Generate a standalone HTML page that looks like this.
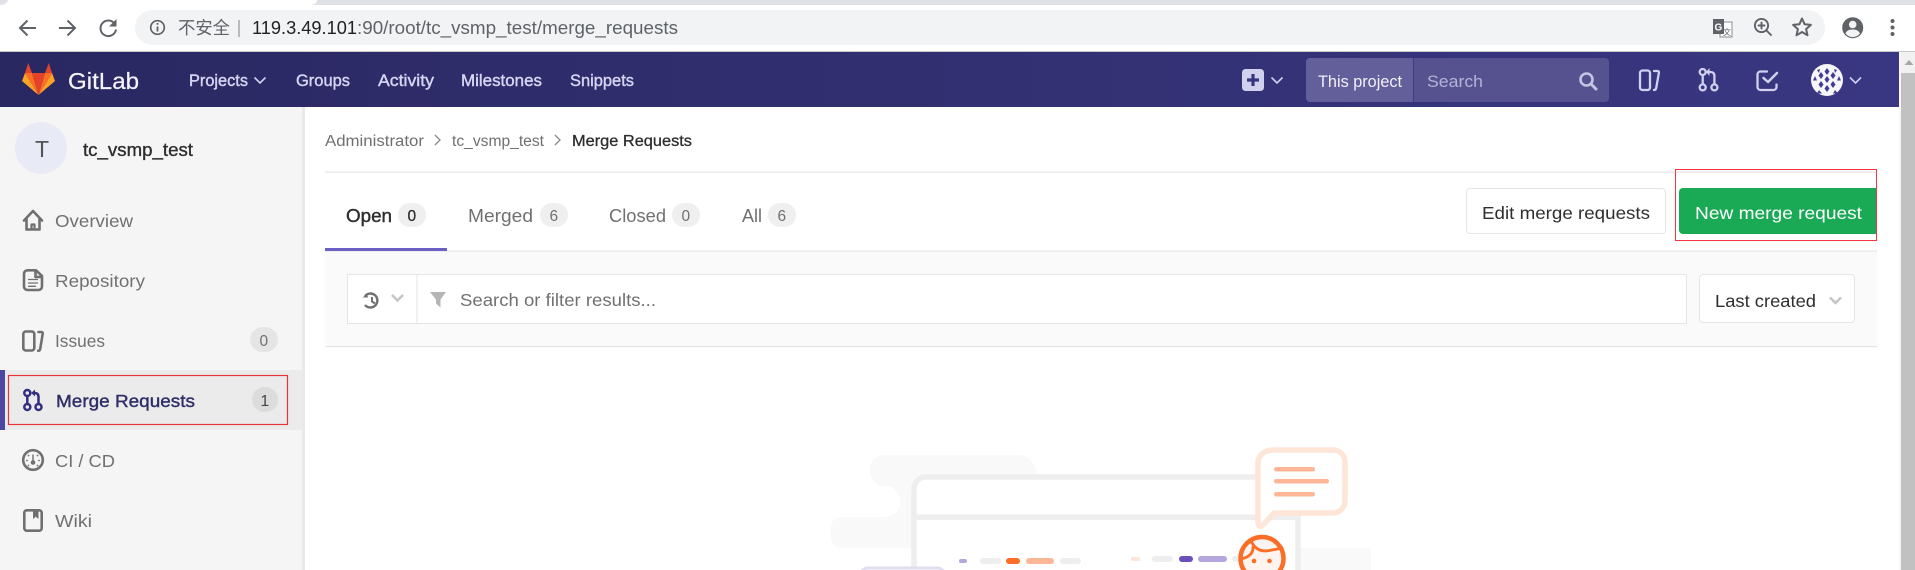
<!DOCTYPE html>
<html lang="en"><head><meta charset="utf-8"><title>Merge Requests</title>
<style>
html,body{margin:0;padding:0;width:1915px;height:570px;overflow:hidden;background:#fff}
svg{display:block;font-family:"Liberation Sans","Noto Sans CJK SC",sans-serif}
</style></head><body>
<svg xmlns="http://www.w3.org/2000/svg" width="1915" height="570" viewBox="0 0 1915 570">
<defs><linearGradient id="nav" x1="0" x2="1" y1="0" y2="0"><stop offset="0" stop-color="#2a2861"/><stop offset="1" stop-color="#3a3782"/></linearGradient></defs>
<rect width="1915" height="570" fill="#fff"/>
<!-- browser chrome -->
<path d="M311 5a6 5 0 0 0 6-5H1915V5Z" fill="#dee1e6"/>
<path d="M0 0H8Q6 5 0 5Z" fill="#dee1e6"/>
<rect x="0" y="51" width="1915" height="1" fill="#c9cacc"/>
<rect x="135" y="10" width="1690" height="35" rx="17.5" fill="#f1f3f4"/>
<g fill="none" stroke="#5f6368" stroke-width="2">
<path d="M36 28H20M27.5 20.5L20 28l7.5 7.5"/>
<path d="M59 28H75M67.5 20.5L75 28l-7.5 7.5"/>
<path d="M114.8 24A7.8 7.8 0 1 0 116 29.5"/>
<circle cx="157.5" cy="27.5" r="6.8" stroke-width="1.7"/>
<path d="M157.5 26.5v5M157.5 23v1.8" stroke-width="1.8"/>
</g>
<path d="M116.5 19v7.5H109Z" fill="#5f6368"/>
<text x="178" y="34" font-size="17.5" fill="#5f6368" textLength="52" lengthAdjust="spacingAndGlyphs">不安全</text>
<rect x="238.5" y="20" width="1" height="17" fill="#80868b"/>
<text x="252" y="34" font-size="18" fill="#202124" textLength="105" lengthAdjust="spacingAndGlyphs">119.3.49.101</text>
<text x="357" y="34" font-size="18" fill="#5f6368" textLength="321" lengthAdjust="spacingAndGlyphs">:90/root/tc_vsmp_test/merge_requests</text>
<!-- chrome right icons -->
<rect x="1720" y="22" width="12" height="15" fill="#fff" stroke="#8a8d91" stroke-width="1"/>
<text x="1723" y="35" font-size="8" fill="#5f6368">文</text>
<rect x="1713" y="19" width="11" height="15" fill="#5f6368"/>
<text x="1714.5" y="30.5" font-size="10" font-weight="bold" fill="#fff">G</text>
<g fill="none" stroke="#5f6368" stroke-width="1.9">
<circle cx="1761.5" cy="25.5" r="6.6"/>
<path d="M1766.5 30.5L1771 35M1758.5 25.5h6M1761.5 22.5v6" stroke-linecap="round"/>
<path d="M1802 18.5l2.6 5.8 6.3.6-4.8 4.2 1.4 6.2-5.5-3.3-5.5 3.3 1.4-6.2-4.8-4.2 6.3-.6Z" stroke-width="2" stroke-linejoin="round"/>
</g>
<circle cx="1852.7" cy="27.7" r="10.5" fill="#5f6368"/>
<circle cx="1852.7" cy="24.5" r="3.8" fill="#f1f3f4"/>
<path d="M1845.5 33.5c1-3.2 4.5-4 7.2-4s6.2.8 7.2 4a9 9 0 0 1-14.4 0Z" fill="#f1f3f4"/>
<g fill="#5f6368"><circle cx="1892.5" cy="21" r="2"/><circle cx="1892.5" cy="27.5" r="2"/><circle cx="1892.5" cy="34" r="2"/></g>
<!-- navbar -->
<rect x="0" y="52" width="1899" height="55" fill="url(#nav)"/>
<polygon points="22,81 25,73 38.5,95" fill="#fca326"/>
<polygon points="55,81 52,73 38.5,95" fill="#fca326"/>
<polygon points="25,73 32,73 38.5,95" fill="#fc6d26"/>
<polygon points="52,73 45,73 38.5,95" fill="#fc6d26"/>
<polygon points="32,73 45,73 38.5,95" fill="#e24329"/>
<polygon points="25,73 28.2,63 32,73" fill="#e24329"/>
<polygon points="52,73 48.8,63 45,73" fill="#e24329"/>
<text x="68" y="89" font-size="23.5" fill="#f4f4fa" stroke="#f4f4fa" stroke-width=".2" textLength="71" lengthAdjust="spacingAndGlyphs">GitLab</text>
<g font-size="16.5" fill="#d6d5f2" stroke="#d6d5f2" stroke-width=".4">
<text x="189" y="86" textLength="59" lengthAdjust="spacingAndGlyphs">Projects</text>
<text x="296" y="86" textLength="54" lengthAdjust="spacingAndGlyphs">Groups</text>
<text x="378" y="86" textLength="56" lengthAdjust="spacingAndGlyphs">Activity</text>
<text x="461" y="86" textLength="81" lengthAdjust="spacingAndGlyphs">Milestones</text>
<text x="570" y="86" textLength="64" lengthAdjust="spacingAndGlyphs">Snippets</text>
</g>
<g fill="none" stroke="#d1d0ef" stroke-width="1.6">
<path d="M254.5 77.5l5.5 5.5 5.5-5.5"/>
<path d="M1271.5 77.5l5.5 5.5 5.5-5.5"/>
<path d="M1850 77.5l5.5 5.5 5.5-5.5"/>
</g>
<rect x="1242" y="69" width="22" height="22" rx="3.5" fill="#d1d0ef"/>
<path d="M1253 74v12M1247 80h12" stroke="#38367f" stroke-width="3.2"/>
<path d="M1310 58H1413V102H1310a4 4 0 0 1-4-4V62a4 4 0 0 1 4-4Z" fill="#625f9b"/>
<path d="M1414 58H1605a4 4 0 0 1 4 4V98a4 4 0 0 1-4 4H1414Z" fill="#55528f"/>
<rect x="1413" y="58" width="1" height="44" fill="#3d3a85"/>
<text x="1318" y="87" font-size="16.5" fill="#f0f0f8" textLength="84" lengthAdjust="spacingAndGlyphs">This project</text>
<text x="1427" y="87" font-size="17" fill="#b5b3d8" textLength="56" lengthAdjust="spacingAndGlyphs">Search</text>
<circle cx="1586.5" cy="79.500" r="6" fill="none" stroke="#c5c4e3" stroke-width="2.6"/>
<path d="M1591 84l5 5" stroke="#c5c4e3" stroke-width="3" stroke-linecap="round"/>
<g fill="none" stroke="#d1d0ef" stroke-width="2.300" stroke-linecap="round" stroke-linejoin="round">
<rect x="1640" y="70.5" width="10" height="19.5" rx="2.5"/>
<path d="M1654 71h3.5q1.7 0 1.4 1.7l-2.7 15.3q-.4 2-2.2 2"/>
<circle cx="1702.7" cy="72" r="3"/><circle cx="1702.7" cy="87.4" r="3"/><circle cx="1714.4" cy="87.4" r="3"/>
<path d="M1702.7 75v9.4M1714.4 84.4V76q0-4-4-4h-2.5"/>
<path d="M1767 71.5h-6.500a3 3 0 0 0-3 3V87a3 3 0 0 0 3 3H1773.500a3 3 0 0 0 3-3v-2.500"/>
<path d="M1763.500 78l4.500 4 9-9" stroke-width="2.500"/>
</g>
<path d="M1709.500 68l-3.500 4 3.500 4Z" fill="#d1d0ef"/>
<circle cx="1827" cy="80" r="16" fill="#f6f6fb"/>
<g fill="#3f3c96">
<path d="M1827 68l2.500 3.500-2.500 3.500-2.500-3.500ZM1821 72l2.500 3.500-2.500 3.500-2.500-3.500ZM1833 72l2.500 3.500-2.500 3.500-2.500-3.500ZM1827 76l2.500 3.500-2.500 3.500-2.500-3.500ZM1821 81l2.500 3.500-2.500 3.500-2.500-3.500ZM1833 81l2.500 3.500-2.500 3.500-2.500-3.500ZM1827 85l2.500 3.500-2.500 3.500-2.500-3.500ZM1815 76l2 4.500-4 0ZM1839 76l2 4.500-4 0ZM1819 90l3 3.500-5 0ZM1835 90l3 3.500-5 0ZM1817 70l3-1-1 4ZM1837 70l-3-1 1 4Z"/>
</g>
<!-- scrollbar -->
<rect x="1899" y="52" width="16" height="518" fill="#f1f1f1"/>
<rect x="1899" y="52" width="2" height="518" fill="#f7f7f7"/>
<rect x="1901" y="73" width="14" height="497" fill="#c1c1c1"/>
<path d="M1909 60l4.500 5h-9Z" fill="#a6a6a6"/>
<!-- sidebar -->
<rect x="0" y="107" width="302" height="463" fill="#f5f5f5"/>
<rect x="302" y="107" width="3" height="463" fill="#e9e9e9"/>
<circle cx="41" cy="148" r="26" fill="#e8eaf6"/>
<text x="35" y="157" font-size="23" fill="#555">T</text>
<text x="83" y="156" font-size="18" fill="#2e2e2e" stroke="#2e2e2e" stroke-width=".35" textLength="110" lengthAdjust="spacingAndGlyphs">tc_vsmp_test</text>
<rect x="0" y="370" width="302" height="60" fill="#ebebeb"/>
<rect x="0" y="370" width="5" height="60" fill="#4b47a3"/>
<rect x="8.500" y="375.500" width="279" height="49" fill="none" stroke="#e8333a" stroke-width="1.200"/>
<g font-size="17.500" fill="#707070">
<text x="55" y="227" textLength="78" lengthAdjust="spacingAndGlyphs">Overview</text>
<text x="55" y="287" textLength="90" lengthAdjust="spacingAndGlyphs">Repository</text>
<text x="55" y="347" textLength="50" lengthAdjust="spacingAndGlyphs">Issues</text>
<text x="55" y="467" textLength="60" lengthAdjust="spacingAndGlyphs">CI / CD</text>
<text x="55" y="527" textLength="37" lengthAdjust="spacingAndGlyphs">Wiki</text>
</g>
<text x="56" y="407" font-size="17.500" fill="#2e2d68" stroke="#2e2d68" stroke-width=".4" textLength="139" lengthAdjust="spacingAndGlyphs">Merge Requests</text>
<rect x="250" y="327" width="28" height="25" rx="12.500" fill="#e5e5e5"/>
<text x="259.500" y="346" font-size="15.500" fill="#707070">0</text>
<rect x="252" y="387" width="26" height="25" rx="12.500" fill="#dcdcdc"/>
<text x="260.500" y="406" font-size="15.500" fill="#444">1</text>
<g fill="none" stroke="#707070" stroke-width="2.600" stroke-linejoin="round" stroke-linecap="round">
<path d="M24 220.500L33 211l9 9.500M26.500 218.500V229.500H39.500V218.500"/>
<path d="M31.500 229v-4.500h3V229" stroke-width="2.200"/>
<path d="M36 270.300H27.500a3.500 3.500 0 0 0-3.500 3.500V286.500a3.500 3.500 0 0 0 3.500 3.500H38.500a3.500 3.500 0 0 0 3.500-3.500V276ZM35.500 271v6h6"/>
<path d="M28.500 279.500h9M28.500 283h9M28.500 286.300h7" stroke-width="1.300"/>
<rect x="23.300" y="331.500" width="11" height="19" rx="2.500"/>
<path d="M38.500 332h2.800q1.700 0 1.400 1.700l-2.500 15.300q-.4 1.800-2 1.800"/>
<circle cx="33" cy="460" r="9.800"/>
<rect x="24.300" y="510.300" width="17.400" height="20.400" rx="2.500"/>
</g>
<g fill="#707070">
<path d="M33 510h5.500v9l-2.700-2.200-2.800 2.200Z"/>
<circle cx="33" cy="462.500" r="2.300"/><rect x="32.300" y="454.500" width="1.400" height="7"/>
<circle cx="27" cy="460.500" r=".9"/><circle cx="28.500" cy="455.500" r=".9"/><circle cx="37.500" cy="455.500" r=".9"/><circle cx="39" cy="460.500" r=".9"/><circle cx="28.500" cy="465.500" r=".9"/><circle cx="37.500" cy="465.500" r=".9"/>
</g>
<g fill="none" stroke="#322f80" stroke-width="2.500" stroke-linecap="round">
<circle cx="27.300" cy="393" r="3"/><circle cx="27.300" cy="407" r="3"/><circle cx="38.500" cy="407" r="3"/>
<path d="M27.300 396v8M38.500 404V397q0-4-4-4h-1"/>
</g>
<path d="M35 389.500l-3.800 3.500 3.800 3.500Z" fill="#322f80"/>
<!-- breadcrumbs -->
<text x="325" y="146" font-size="15.500" fill="#707070" textLength="99" lengthAdjust="spacingAndGlyphs">Administrator</text>
<text x="452" y="146" font-size="15.500" fill="#707070" textLength="92" lengthAdjust="spacingAndGlyphs">tc_vsmp_test</text>
<text x="572" y="146" font-size="15.500" fill="#2e2e2e" stroke="#2e2e2e" stroke-width=".3" textLength="120" lengthAdjust="spacingAndGlyphs">Merge Requests</text>
<path d="M435 135l5 5-5 5M555 135l5 5-5 5" fill="none" stroke="#8a8a8a" stroke-width="1.300"/>
<rect x="325" y="171.500" width="1552" height="1.200" fill="#e5e5e5"/>
<!-- tabs -->
<text x="346" y="222" font-size="18" fill="#2e2e2e" stroke="#2e2e2e" stroke-width=".4" textLength="46" lengthAdjust="spacingAndGlyphs">Open</text>
<text x="468" y="222" font-size="18" fill="#707070" textLength="65" lengthAdjust="spacingAndGlyphs">Merged</text>
<text x="609" y="222" font-size="18" fill="#707070" textLength="57" lengthAdjust="spacingAndGlyphs">Closed</text>
<text x="742" y="222" font-size="18" fill="#707070" textLength="20" lengthAdjust="spacingAndGlyphs">All</text>
<g fill="#efefef">
<rect x="398" y="203" width="28" height="24" rx="12"/>
<rect x="540" y="203" width="28" height="24" rx="12"/>
<rect x="672" y="203" width="28" height="24" rx="12"/>
<rect x="768" y="203" width="28" height="24" rx="12"/>
</g>
<g font-size="15.500" fill="#707070">
<text x="407.500" y="221" fill="#2e2e2e" stroke="#2e2e2e" stroke-width=".3">0</text>
<text x="549.500" y="221">6</text>
<text x="681.500" y="221">0</text>
<text x="777.500" y="221">6</text>
</g>
<rect x="1466.500" y="188.500" width="199" height="45" rx="3.500" fill="#fff" stroke="#e5e5e5"/>
<text x="1482" y="219" font-size="17.500" fill="#2e2e2e" textLength="168" lengthAdjust="spacingAndGlyphs">Edit merge requests</text>
<path d="M1683 188H1877V234H1683a4 4 0 0 1-4-4V192a4 4 0 0 1 4-4Z" fill="#1aaa55"/>
<text x="1695" y="219" font-size="17.500" fill="#fff" textLength="167" lengthAdjust="spacingAndGlyphs">New merge request</text>
<rect x="1675.500" y="169.500" width="201" height="71" fill="none" stroke="#f0373d" stroke-width="1"/>
<!-- filter bar -->
<rect x="325" y="251" width="1552" height="96" fill="#fafafa"/>
<rect x="325" y="250.500" width="1552" height="1.200" fill="#e5e5e5"/>
<rect x="325" y="346" width="1552" height="1.200" fill="#e5e5e5"/>
<rect x="325" y="248" width="122" height="3" fill="#6b61c5"/>
<rect x="347.500" y="274.500" width="1339" height="49" fill="#fff" stroke="#e5e5e5"/>
<rect x="416.500" y="275" width="1" height="48" fill="#e5e5e5"/>
<path d="M365 296a7 7 0 1 1 0 9" fill="none" stroke="#707070" stroke-width="2.400"/>
<path d="M362.500 297.500h5.500l-1-3.500Z" fill="#707070"/>
<path d="M372 297v4.500l3 2" fill="none" stroke="#707070" stroke-width="2"/>
<path d="M392 295l5.500 5.500 5.500-5.500" fill="none" stroke="#c4c4c4" stroke-width="2.500"/>
<path d="M430 292H446L440.500 299.500V307.500L436 303.500V299.500Z" fill="#b5b5b5"/>
<text x="460" y="306" font-size="17.500" fill="#707070" textLength="196" lengthAdjust="spacingAndGlyphs">Search or filter results...</text>
<rect x="1699.500" y="274.500" width="155" height="48" rx="3.500" fill="#fff" stroke="#e5e5e5"/>
<text x="1715" y="307" font-size="17.500" fill="#2e2e2e" textLength="101" lengthAdjust="spacingAndGlyphs">Last created</text>
<path d="M1830 297.500l5.500 5.500 5.500-5.500" fill="none" stroke="#c4c4c4" stroke-width="2.500"/>
<!-- illustration -->
<path d="M885 455H1018a18 18 0 0 1 18 18V480H930V548H841a10 10 0 0 1-10-10V527a10 10 0 0 1 10-10H885a15.500 15.500 0 0 0 0-31a15.500 15.500 0 0 1 0-31Z" fill="#f9f9f9"/>
<rect x="1300" y="548" width="71" height="22" fill="#f9f9f9"/>
<path d="M914 575V489a12 12 0 0 1 12-12H1286a12 12 0 0 1 12 12V575Z" fill="#fff" stroke="#eee" stroke-width="5.500"/>
<rect x="914" y="514.500" width="384" height="5.500" fill="#eee"/>
<path d="M1273 450H1333a12 12 0 0 1 12 12V501a12 12 0 0 1-12 12H1274L1264 524Q1258 529 1258 522V462a15 12 0 0 1 15-12Z" fill="#fff" stroke="#fde5d8" stroke-width="5.500" stroke-linejoin="round"/>
<g fill="#feb697"><rect x="1274" y="467" width="41" height="4.500" rx="2.200"/><rect x="1274" y="479" width="55" height="4.500" rx="2.200"/><rect x="1274" y="492" width="41" height="4.500" rx="2.200"/></g>
<rect x="959" y="559" width="8" height="4" rx="2" fill="#b5a7dd"/>
<rect x="980" y="558" width="21" height="6" rx="3" fill="#eee"/>
<rect x="1006" y="558" width="14" height="6" rx="3" fill="#fc6d26"/>
<rect x="1026" y="558" width="28" height="6" rx="3" fill="#feb697"/>
<rect x="1060" y="558" width="21" height="6" rx="3" fill="#eee"/>
<rect x="1131" y="557" width="9" height="4" rx="2" fill="#fde5d8"/>
<rect x="1152" y="556" width="21" height="6" rx="3" fill="#eee"/>
<rect x="1179" y="556" width="14" height="6" rx="3" fill="#6b4fbb"/>
<rect x="1198" y="556" width="29" height="6" rx="3" fill="#b5a7dd"/>
<rect x="1232" y="556" width="10" height="6" rx="3" fill="#eee"/>
<path d="M860 575a8 8 0 0 1 8-7H937a8 8 0 0 1 8 7" fill="#fff" stroke="#e1dcf0" stroke-width="3"/>
<circle cx="1262" cy="558.500" r="21.500" fill="#fef4ef" stroke="#fc6d26" stroke-width="4.500"/>
<path d="M1251 541Q1257 554 1272 550Q1279 549 1283 547M1253 546Q1254 556 1241 559" fill="none" stroke="#fc6d26" stroke-width="2.800"/>
<circle cx="1254" cy="561" r="2.300" fill="#fc6d26"/><circle cx="1269.500" cy="561" r="2.300" fill="#fc6d26"/>
</svg>
</body></html>
